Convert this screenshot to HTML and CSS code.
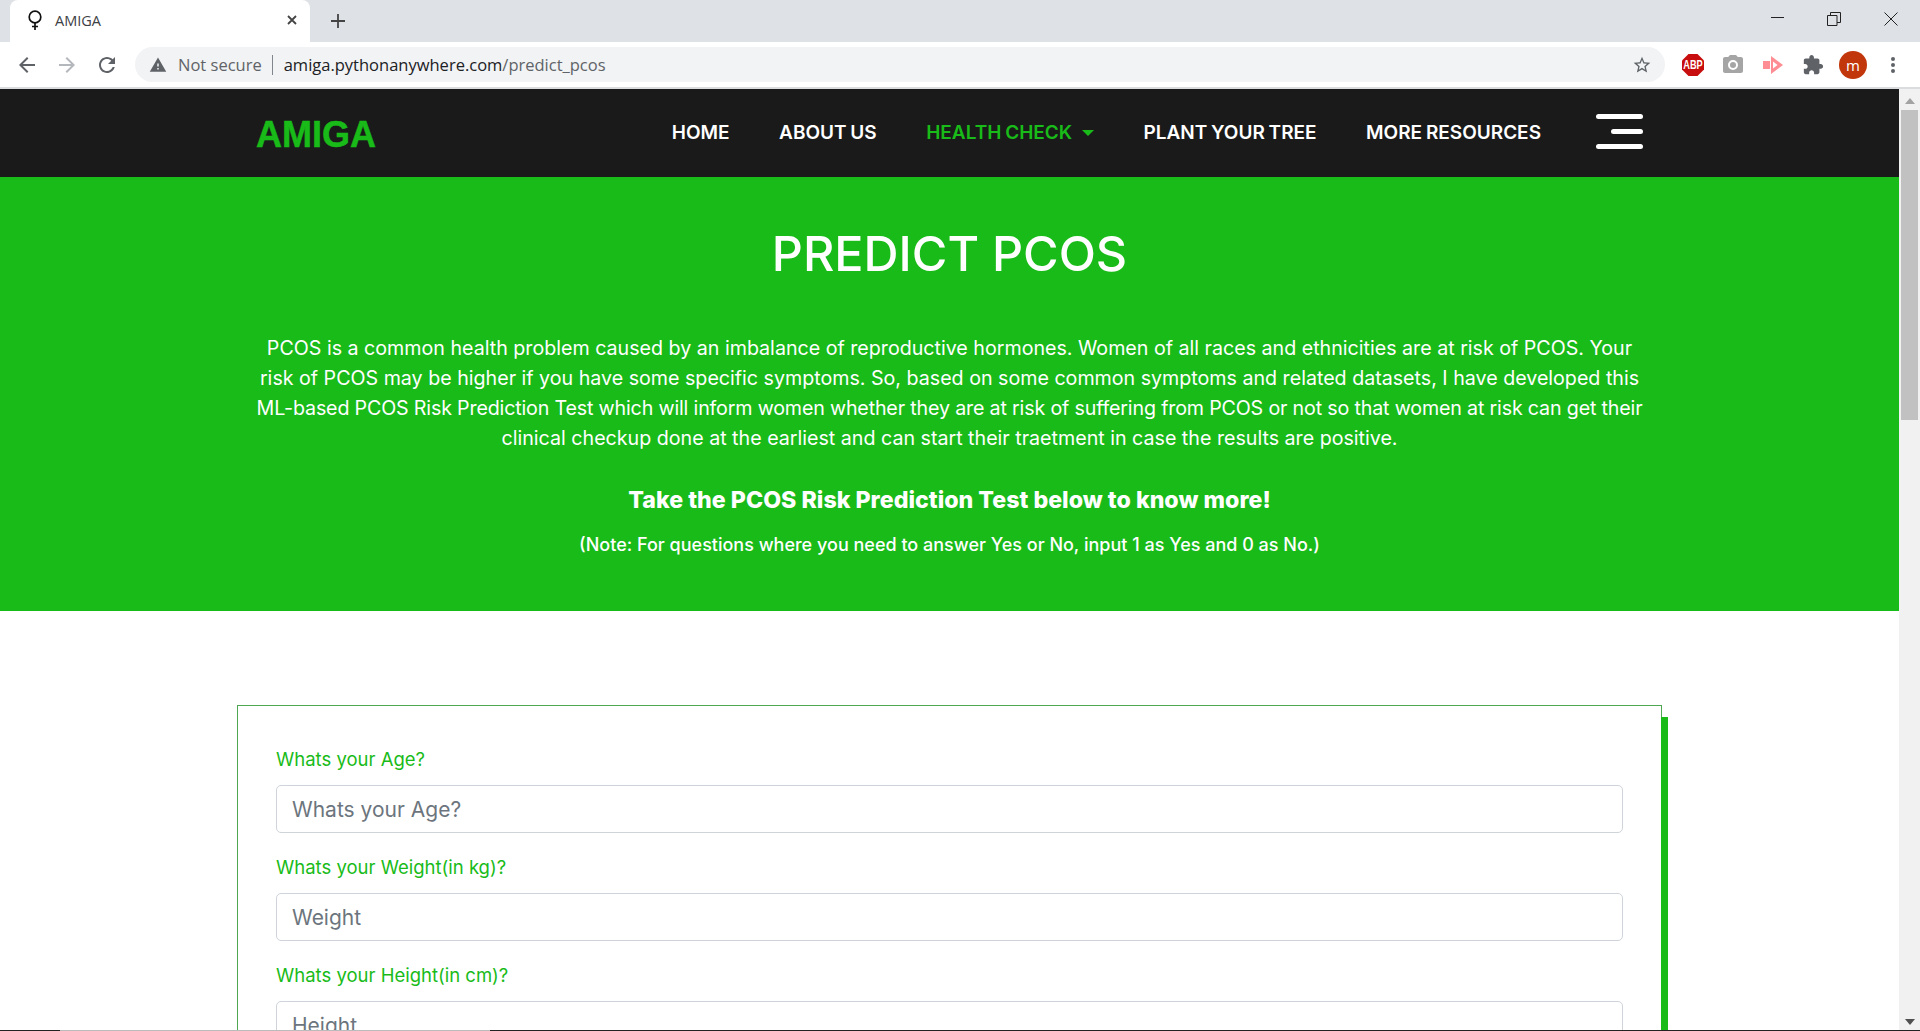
FILE: index.html
```html
<!DOCTYPE html>
<html lang="en">
<head>
<meta charset="utf-8">
<title>AMIGA</title>
<link rel="stylesheet" href="styles.css">
</head>
<body>
<div class="chrome">
  <div class="tabstrip">
    <div class="tab">
      <svg class="favicon" viewBox="0 0 16 20" width="16" height="20"><circle cx="8" cy="7" r="5.800" fill="none" stroke="#111" stroke-width="1.700"/><path d="M8 13v7M5 16.500h6" stroke="#111" stroke-width="1.700"/></svg>
      <span class="tab-title">AMIGA</span>
      <svg class="tab-close" viewBox="0 0 10 10" width="10" height="10"><path d="M1 1l8 8M9 1l-8 8" stroke="#444" stroke-width="1.800"/></svg>
    </div>
    <svg class="newtab" viewBox="0 0 14 14" width="14" height="14"><path d="M7 0v14M0 7h14" stroke="#444" stroke-width="1.800"/></svg>
    <div class="winctl">
      <svg viewBox="0 0 14 14" width="14" height="14"><path d="M1 5.500h13" stroke="#222" stroke-width="1"/></svg>
      <svg viewBox="0 0 14 14" width="14" height="14"><path d="M.5 3.500h9.500v10h-9.500zM3.500 3.500v-3h10v10h-3.500" fill="none" stroke="#222" stroke-width="1"/></svg>
      <svg viewBox="0 0 14 14" width="14" height="14"><path d="M.5.5l13 13M13.500.5l-13 13" stroke="#222" stroke-width="1"/></svg>
    </div>
  </div>
  <div class="toolbar">
    <svg class="tb-ico" viewBox="0 0 24 24" width="24" height="24"><path fill="#5f6368" d="M20 11H7.830l5.590-5.590L12 4l-8 8 8 8 1.410-1.410L7.830 13H20v-2z"/></svg>
    <svg class="tb-ico" viewBox="0 0 24 24" width="24" height="24"><path fill="#b4b7bb" d="M12 4l-1.410 1.410L16.170 11H4v2h12.170l-5.580 5.590L12 20l8-8z"/></svg>
    <svg class="tb-ico" viewBox="0 0 24 24" width="24" height="24"><path fill="#5f6368" d="M17.650 6.350C16.200 4.900 14.210 4 12 4c-4.420 0-7.990 3.580-7.990 8s3.570 8 7.990 8c3.730 0 6.840-2.550 7.730-6h-2.080c-.82 2.330-3.040 4-5.650 4-3.310 0-6-2.690-6-6s2.690-6 6-6c1.660 0 3.140.69 4.220 1.780L13 11h7V4l-2.350 2.350z"/></svg>
    <div class="omnibox">
      <svg viewBox="0 0 24 24" width="18" height="18"><path fill="#5f6368" d="M1 21h22L12 2 1 21zm12-3h-2v-2h2v2zm0-4h-2v-4h2v4z"/></svg>
      <span class="not-secure">Not secure</span>
      <span class="omni-sep"></span>
      <span class="url"><span class="url-host">amiga.pythonanywhere.com</span>/predict_pcos</span>
      <svg class="star" viewBox="0 0 24 24" width="20" height="20"><path fill="#5f6368" d="M22 9.240l-7.190-.62L12 2 9.190 8.630 2 9.240l5.460 4.730L5.820 21 12 17.270 18.180 21l-1.630-7.030L22 9.240zM12 15.400l-3.760 2.270 1-4.280-3.320-2.880 4.380-.38L12 6.100l1.710 4.040 4.380.38-3.320 2.880 1 4.280L12 15.400z"/></svg>
    </div>
    <div class="exts">
      <span class="slot"><svg viewBox="0 0 22 22" width="22" height="22"><path d="M6.500 0h9L22 6.500v9L15.500 22h-9L0 15.500v-9z" fill="#c70d0d"/><text transform="translate(11 15.300) scale(.92 1.200)" class="abp">ABP</text></svg></span>
      <span class="slot"><svg viewBox="0 0 24 24" width="24" height="24"><path fill="#a5a5a5" fill-rule="evenodd" d="M9 2L7.170 4H4c-1.100 0-2 .9-2 2v12c0 1.100.9 2 2 2h16c1.100 0 2-.9 2-2V6c0-1.100-.9-2-2-2h-3.170L15 2H9zm3 15a5 5 0 1 1 0-10 5 5 0 0 1 0 10z"/><circle cx="12" cy="12" r="3" fill="#a5a5a5"/></svg></span>
      <span class="slot"><svg viewBox="0 0 20 18" width="20" height="18"><path d="M0 5h7v8H0z" fill="#ff8d94"/><path d="M8 0l12 9-12 9z" fill="#ff8d94"/><path d="M10 5.500L14.500 9l-4.500 3.500z" fill="#fff"/></svg></span>
      <span class="slot"><svg viewBox="0 0 24 24" width="22" height="22"><path fill="#5f6368" d="M20.500 11H19V7c0-1.100-.9-2-2-2h-4V3.500C13 2.120 11.880 1 10.500 1S8 2.120 8 3.500V5H4c-1.100 0-1.990.9-1.990 2v3.800H3.500c1.490 0 2.700 1.210 2.700 2.700s-1.210 2.700-2.700 2.700H2V20c0 1.100.9 2 2 2h3.800v-1.500c0-1.490 1.210-2.700 2.700-2.700 1.490 0 2.700 1.210 2.700 2.700V22H17c1.100 0 2-.9 2-2v-4h1.500c1.380 0 2.500-1.120 2.500-2.500S21.880 11 20.500 11z"/></svg></span>
      <span class="slot"><span class="avatar">m</span></span>
      <span class="slot"><svg viewBox="0 0 4 16" width="4" height="16"><circle cx="2" cy="2" r="2" fill="#5f6368"/><circle cx="2" cy="8" r="2" fill="#5f6368"/><circle cx="2" cy="14" r="2" fill="#5f6368"/></svg></span>
    </div>
  </div>
</div>

<div class="viewport">
  <div class="page">
    <nav class="nav">
      <a class="brand">AMIGA</a>
      <ul class="menu">
        <li>HOME</li>
        <li>ABOUT US</li>
        <li class="active">HEALTH CHECK <span class="caret"></span></li>
        <li>PLANT YOUR TREE</li>
        <li>MORE RESOURCES</li>
      </ul>
      <div class="burger"><span></span><span class="short"></span><span></span></div>
    </nav>
    <header class="hero">
      <h1>PREDICT PCOS</h1>
      <p class="lead">PCOS is a common health problem caused by an imbalance of reproductive hormones. Women of all races and ethnicities are at risk of PCOS. Your<br>risk of PCOS may be higher if you have some specific symptoms. So, based on some common symptoms and related datasets, I have developed this<br><span class="tight">ML-based PCOS Risk Prediction Test which will inform women whether they are at risk of suffering from PCOS or not so that women at risk can get their</span><br>clinical checkup done at the earliest and can start their traetment in case the results are positive.</p>
      <h2>Take the PCOS Risk Prediction Test below to know more!</h2>
      <p class="note">(Note: For questions where you need to answer Yes or No, input 1 as Yes and 0 as No.)</p>
    </header>
    <section class="form-wrap">
      <form class="card">
        <label class="field-label">Whats your Age?</label>
        <input class="field" placeholder="Whats your Age?">
        <label class="field-label">Whats your Weight(in kg)?</label>
        <input class="field" placeholder="Weight">
        <label class="field-label">Whats your Height(in cm)?</label>
        <input class="field" placeholder="Height">
      </form>
    </section>
  </div>
  <div class="scrollbar">
    <span class="sb-up"></span>
    <div class="sb-thumb"></div>
    <span class="sb-down"></span>
  </div>
</div>
<div class="taskline"><span class="tl-a"></span><span class="tl-b"></span><span class="tl-c"></span></div>
</body>
</html>
```
FILE: styles.css
```css
* { box-sizing: border-box; }
html, body { margin: 0; height: 100%; overflow: hidden; }
body { width: 1920px; height: 1031px; display: flex; flex-direction: column; font-family: Inter, "Open Sans", sans-serif; background: #fff; }

.chrome { flex: none; height: 89px; display: flex; flex-direction: column; border-bottom: 2px solid #dadce0; }
.tabstrip { height: 42px; background: #dee1e6; display: flex; align-items: flex-end; padding-left: 10px; }
.tab { width: 300px; height: 42px; background: #fff; border-radius: 8px 8px 0 0; display: flex; align-items: center; padding: 0 13px 2px 17px; }
.favicon { flex: none; margin-right: 12px; }
.tab-title { flex: 1; font-family: "Open Sans", sans-serif; font-size: 14.500px; color: #3c4043; }
.newtab { margin: 0 0 14px 21px; }
.winctl { margin-left: auto; display: flex; gap: 43px; padding: 0 22px 16px 0; }
.toolbar { height: 45px; background: #fff; display: flex; align-items: center; padding-left: 15px; }
.tb-ico { flex: none; margin-right: 16px; }
.omnibox { flex: none; width: 1530px; height: 35px; background: #f1f3f4; border-radius: 18px; display: flex; align-items: center; padding: 0 13px 0 14px; }
.not-secure { margin-left: 11px; font-family: "Open Sans", sans-serif; font-size: 16.500px; color: #5f6368; }
.omni-sep { width: 1px; height: 20px; background: #80868b; margin: 0 11px 0 10px; }
.url { font-family: "Open Sans", sans-serif; font-size: 16.500px; color: #5f6368; }
.url-host { color: #202124; }
.star { margin-left: auto; }
.exts { flex: 1; display: flex; align-items: center; padding-left: 8px; }
.slot { flex: none; width: 40px; display: flex; align-items: center; justify-content: center; }
.abp { font-family: "Liberation Sans", sans-serif; font-size: 10px; font-weight: 700; fill: #fff; text-anchor: middle; }
.avatar { width: 28px; height: 28px; border-radius: 50%; background: #c1360b; color: #fff; font-family: "Open Sans", sans-serif; font-size: 15px; display: flex; align-items: center; justify-content: center; }

.viewport { flex: 1; min-height: 0; display: flex; overflow: hidden; }
.page { flex: 1; min-width: 0; }
.nav { height: 88px; background: #1a1a1a; display: flex; align-items: center; padding: 0 256px 4px 256px; }
.brand { font-family: "Liberation Sans", sans-serif; font-weight: 700; font-size: 36px; color: #19bb19; -webkit-text-stroke: .5px #19bb19; padding-top: 8px; }
.menu { list-style: none; margin: 0 0 0 auto; padding: 2px 0 0; display: flex; gap: 49.500px; font-weight: 600; font-size: 19px; word-spacing: -1px; color: #fff; }
.menu .active { color: #19bb19; }
.caret { display: inline-block; width: 0; height: 0; margin-left: 6px; vertical-align: 3px; border-top: 6px solid #19bb19; border-left: 6px solid transparent; border-right: 6px solid transparent; }
.burger { margin-left: 55px; width: 47px; display: flex; flex-direction: column; align-items: flex-end; gap: 10px; }
.burger span { display: block; width: 47px; height: 5px; background: #fff; border-radius: 3px; }
.burger .short { width: 32px; }

.hero { height: 434px; background: #19bb19; color: #fff; padding: 47px 240px 0; text-align: center; }
.hero h1 { margin: 0; font-weight: 500; font-size: 48.500px; line-height: 60px; }
.lead { margin: 49px 0 0; font-size: 19.650px; line-height: 30px; }
.tight { letter-spacing: -.16px; }
.hero h2 { margin: 32px 0 0; font-weight: 800; font-size: 23.200px; line-height: 30px; }
.note { margin: 15px 0 0; font-size: 18px; line-height: 30px; font-weight: 500; }

.form-wrap { padding: 94px 0 0 237px; }
.card { position: relative; width: 1425px; height: 400px; border: 1px solid #4fa653; padding: 40px 38px; background: #fff; }
.card::after { content: ""; position: absolute; top: 11px; left: 100%; width: 7px; bottom: 0; background: #19bb19; }
.field-label { display: block; font-size: 18.500px; line-height: 27px; color: #19bb19; margin-bottom: 12px; }
.field { display: block; width: 100%; height: 48px; border: 1px solid #ced4da; border-radius: 5px; padding: 0 15px; margin-bottom: 21px; font-family: Inter, sans-serif; font-size: 21px; background: #fff; }
.field::placeholder { color: #6c757d; opacity: 1; }

.scrollbar { flex: none; width: 21px; background: #f1f1f1; display: flex; flex-direction: column; align-items: center; }
.sb-up { margin-top: 9px; border-bottom: 6px solid #a3a3a3; border-left: 5px solid transparent; border-right: 5px solid transparent; }
.sb-thumb { width: 17px; height: 310px; margin-top: 6px; background: #c1c1c1; }
.sb-down { margin-top: auto; margin-bottom: 6px; border-top: 6px solid #505050; border-left: 5px solid transparent; border-right: 5px solid transparent; }

.taskline { position: absolute; left: 0; right: 0; top: 1030px; height: 1px; display: flex; }
.tl-a { width: 60px; background: #222; }
.tl-b { width: 430px; background: #bbb; }
.tl-c { flex: 1; background: #222; }
```
